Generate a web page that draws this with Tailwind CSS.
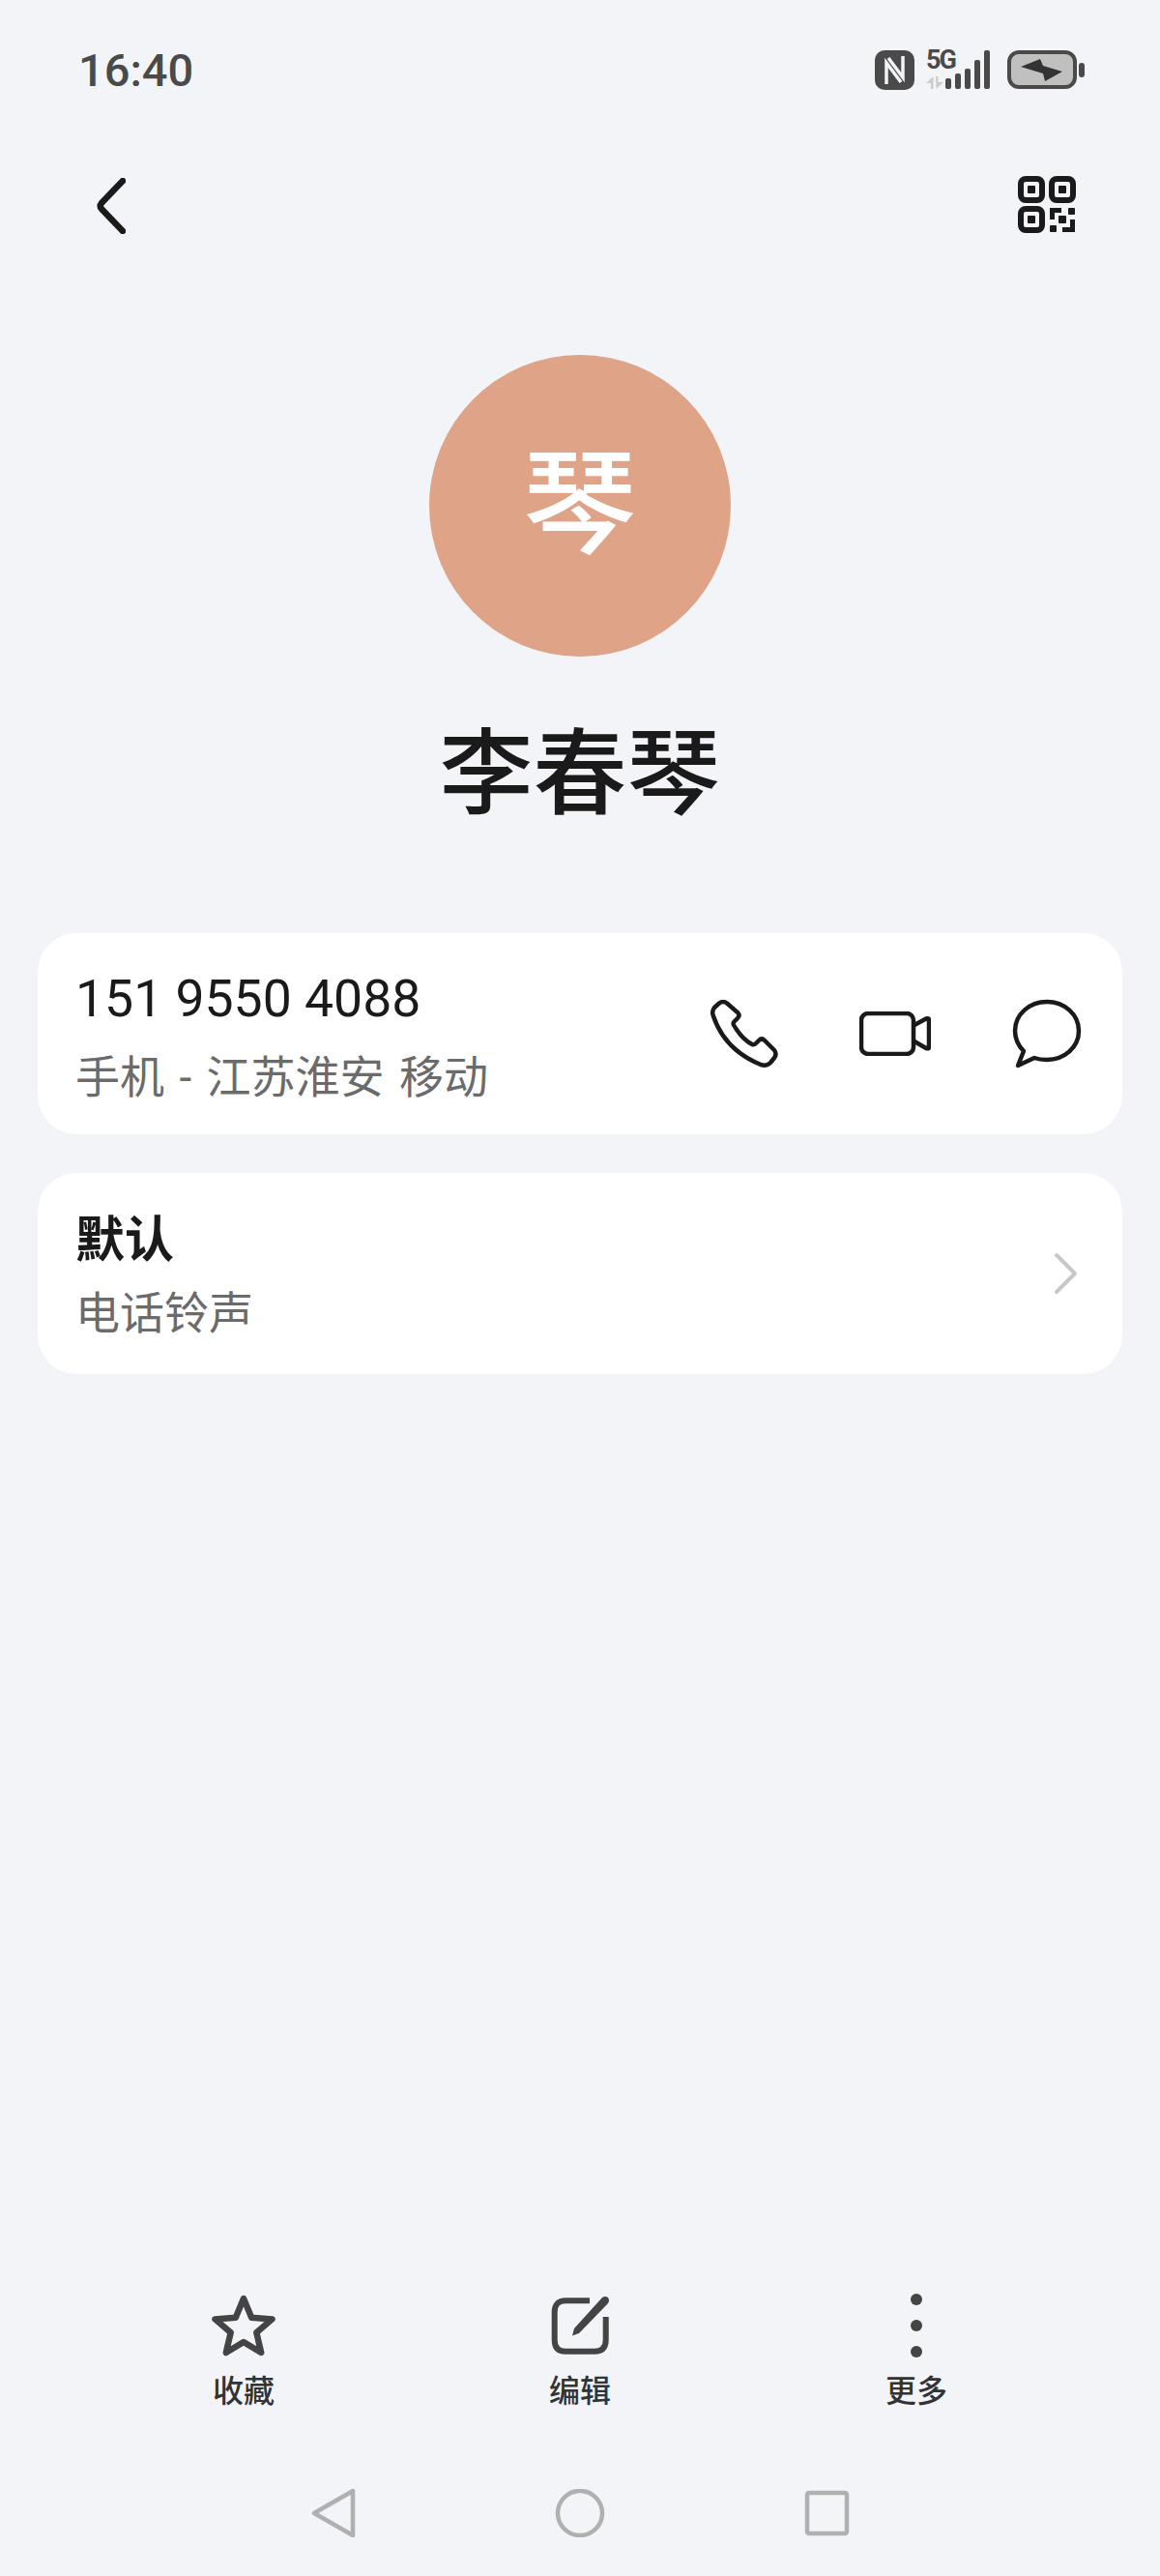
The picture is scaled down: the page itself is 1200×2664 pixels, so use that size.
<!doctype html>
<html>
<head>
  <meta charset="UTF-8">
  <meta name="viewport" content="width=device-width, initial-scale=1.0">
  <script src="https://cdn.jsdelivr.net/npm/@tailwindcss/browser@4"></script>
</head>
<body class="bg-[#f2f4f8]">
  <div class="w-[1200px] h-[2664px] flex flex-col bg-[#f2f4f8] text-[#1a1a1a] font-['Roboto','Noto_Sans_CJK_SC',sans-serif] overflow-hidden">

    <!-- status bar -->
    <div class="h-[144px] shrink-0 flex items-center justify-between pl-[81px] pr-[78px]">
      <span class="text-[47px] leading-none font-medium text-[#4a4a4a]">16:40</span>
      <div class="flex items-center">
        <svg width="41" height="41" viewBox="0 0 41 41" fill="none">
          <rect width="41" height="41" rx="10" fill="#4a4a4a"/>
          <path d="M12 35V13L27 33" stroke="#f2f4f8" stroke-width="3.500"/>
          <path d="M29 6V28L14 8" stroke="#f2f4f8" stroke-width="3.500"/>
        </svg>
        <div class="relative w-[66px] h-[40px] ml-[12px]">
          <span class="absolute left-0 top-[-3px] text-[27px] leading-[27px] font-bold text-[#4a4a4a] tracking-[-2px]">5G</span>
          <svg class="absolute inset-0" width="66" height="40" viewBox="0 0 66 40" fill="#4a4a4a">
            <path d="M0 34L7.500 27V40H5V34ZM10 27H12.500V33H18L10.500 40Z" fill="#cccccc"/>
            <rect x="20" y="29" width="6" height="11" rx="2"/>
            <rect x="30" y="24" width="6" height="16" rx="2"/>
            <rect x="40" y="19" width="6" height="21" rx="2"/>
            <rect x="50" y="10" width="6" height="30" rx="2"/>
            <rect x="60" y="0" width="6" height="40" rx="2"/>
          </svg>
        </div>
        <svg class="ml-[18px]" width="80" height="40" viewBox="0 0 80 40">
          <rect x="2" y="2" width="68" height="36" rx="10" fill="#c0c0c0" stroke="#4a4a4a" stroke-width="4"/>
          <path d="M14 17L34 9L37 16L57 22L39 32L37 24Z" fill="#333"/>
          <rect x="74" y="13" width="6" height="15" rx="3" fill="#4a4a4a"/>
        </svg>
      </div>
    </div>

    <!-- header -->
    <div class="h-[138px] shrink-0 flex items-center justify-between pl-[100px] pr-[87px]">
      <svg width="30" height="58" viewBox="0 0 30 58" fill="none" stroke="#1a1a1a" stroke-width="6.500" stroke-linecap="round">
        <path d="M27 3L5 26Q2.500 29 5 32L27 55"/>
      </svg>
      <svg class="mb-[2px]" width="60" height="60" viewBox="0 0 60 60" fill="#1a1a1a">
        <rect x="3" y="3" width="22" height="22" rx="5" fill="none" stroke="#1a1a1a" stroke-width="6"/>
        <rect x="35" y="3" width="22" height="22" rx="5" fill="none" stroke="#1a1a1a" stroke-width="6"/>
        <rect x="3" y="34" width="22" height="22" rx="5" fill="none" stroke="#1a1a1a" stroke-width="6"/>
        <rect x="10" y="10" width="8" height="8" rx="1"/>
        <rect x="42" y="10" width="8" height="8" rx="1"/>
        <rect x="10" y="41" width="8" height="8" rx="1"/>
        <path d="M33 33H45V38H38V45H33Z"/>
        <rect x="52" y="33" width="7" height="7" rx="1"/>
        <rect x="42" y="41" width="8" height="8" rx="1"/>
        <rect x="33" y="51" width="7" height="7" rx="1"/>
        <path d="M54 45H59V58H46V53H54Z"/>
      </svg>
    </div>

    <!-- avatar + name -->
    <div class="flex flex-col items-center">
      <div class="mt-[85px] w-[312px] h-[312px] rounded-full bg-[#dfa387] flex items-center justify-center">
        <span class="text-[118px] leading-none font-medium text-white">琴</span>
      </div>
      <h1 class="mt-[72px] text-[97px] leading-[100px] font-medium">李春琴</h1>
    </div>

    <!-- phone card -->
    <div class="mt-[114px] mx-[39px] h-[208px] rounded-[40px] bg-white flex items-center justify-between pl-[39px] pr-[40px]">
      <div class="pt-[9px]">
        <div class="text-[53.5px] leading-[60px]">151 9550 4088</div>
        <div class="mt-[21px] text-[46px] leading-[60px] text-[#6b6b6b] [word-spacing:4px]">手机 - 江苏淮安 移动</div>
      </div>
      <div class="flex items-center gap-[84px]">
        <svg width="70" height="70" viewBox="0 0 70 70" fill="none" stroke="#1a1a1a" stroke-width="4.500" stroke-linejoin="round">
          <path d="M9 3.500Q13 .5 17 3.500L28 13Q31 16 28 19L24.500 22.500Q23 24 24 26Q32 40 43 46Q45 47 47 45L50 42Q53 39 56 42L66 52Q69 56 66 60L62 65Q58 69 52 67Q15 52 3 17Q1 12 4 8Z"/>
        </svg>
        <svg width="74" height="46" viewBox="0 0 74 46" fill="none" stroke="#1a1a1a" stroke-width="4.500" stroke-linejoin="round">
          <rect x="2" y="2" width="54" height="42" rx="7"/>
          <path d="M57 14L69 7.500Q72 6.500 72 9V37Q72 39 69 38L57 31"/>
        </svg>
        <svg width="74" height="72" viewBox="0 0 74 72" fill="none" stroke="#1a1a1a" stroke-width="4.500" stroke-linejoin="round">
          <path d="M23 61C27 62.500 31 63 36 63C54 63 69 50 69 33C69 16 54 3 36 3C18 3 3 16 3 33C3 42 7 49 12 54L6 69Z"/>
        </svg>
      </div>
    </div>

    <!-- ringtone card -->
    <div class="mt-[40px] mx-[39px] h-[208px] rounded-[40px] bg-white flex items-center justify-between pl-[39px] pr-[46px]">
      <div class="pt-[4px]">
        <div class="text-[51px] leading-[56px] font-bold">默认</div>
        <div class="mt-[22px] text-[46px] leading-[50px] text-[#6b6b6b]">电话铃声</div>
      </div>
      <svg width="25" height="44" viewBox="0 0 25 44" fill="none" stroke="#c8c8c8" stroke-width="4" stroke-linecap="round" stroke-linejoin="round">
        <path d="M3 3L22 22L3 41"/>
      </svg>
    </div>

    <!-- actions -->
    <div class="mt-auto flex justify-between px-[192px]">
      <div class="w-[120px] flex flex-col items-center">
        <svg width="68" height="66" viewBox="0 0 68 66" fill="none" stroke="#444" stroke-width="6.500" stroke-linejoin="round">
          <path d="M34 5L42.200 24.700L63.500 26.400L47.300 40.300L52.200 61L34 50L15.800 61L20.700 40.300L4.500 26.400L25.800 24.700Z"/>
        </svg>
        <span class="mt-[15px] text-[32px] leading-[40px] font-medium text-[#333]">收藏</span>
      </div>
      <div class="w-[120px] flex flex-col items-center">
        <svg width="62" height="66" viewBox="0 0 62 66" fill="none" stroke="#444" stroke-width="6">
          <path d="M41 7.300H16Q4.700 7.300 4.700 19V48Q4.700 59.700 16 59.700H46Q57.700 59.700 57.700 48V24"/>
          <path d="M54 4Q57 2 60 4Q62 7 60 10L30 41L23 43.500L25 36Z" fill="#444" stroke="none"/>
        </svg>
        <span class="mt-[15px] text-[32px] leading-[40px] font-medium text-[#333]">编辑</span>
      </div>
      <div class="w-[120px] flex flex-col items-center">
        <svg width="12" height="66" viewBox="0 0 12 66" fill="#444">
          <circle cx="6" cy="6" r="6"/>
          <circle cx="6" cy="33" r="6"/>
          <circle cx="6" cy="60" r="6"/>
        </svg>
        <span class="mt-[15px] text-[32px] leading-[40px] font-medium text-[#333]">更多</span>
      </div>
    </div>

    <!-- nav bar -->
    <div class="mt-[81px] mb-[40px] h-[50px] flex items-center justify-between px-[319px]">
      <svg width="52" height="50" viewBox="0 0 52 50" fill="none" stroke="#b0b0b0" stroke-width="4.500" stroke-linejoin="round">
        <path d="M46 2V48L6 25Z"/>
      </svg>
      <svg width="52" height="50" viewBox="0 0 52 50" fill="none" stroke="#b0b0b0" stroke-width="4.500">
        <circle cx="26" cy="25" r="23"/>
      </svg>
      <svg width="52" height="50" viewBox="0 0 52 50" fill="none" stroke="#b0b0b0" stroke-width="4.500" stroke-linejoin="round">
        <rect x="6" y="4" width="41" height="42" rx="2"/>
      </svg>
    </div>
  </div>
</body>
</html>
